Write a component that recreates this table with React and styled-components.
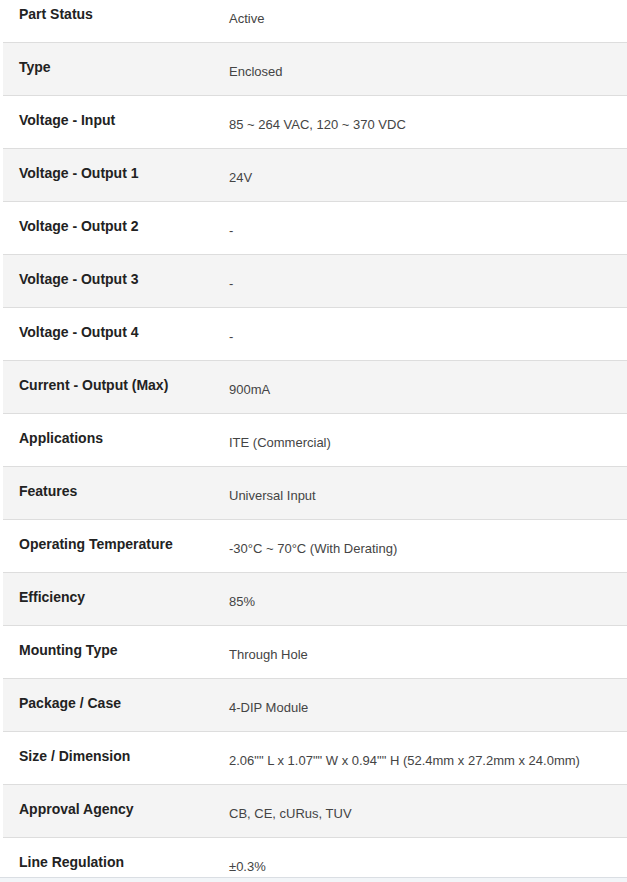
import React from "react";
import styled, { createGlobalStyle } from "styled-components";

const GlobalStyle = createGlobalStyle`
  html, body {
    margin: 0;
    padding: 0;
    background: #ffffff;
    overflow: hidden;
  }
  body {
    font-family: "Liberation Sans", Arial, sans-serif;
  }
`;

const specs = [
  ["Part Status", "Active"],
  ["Type", "Enclosed"],
  ["Voltage - Input", "85 ~ 264 VAC, 120 ~ 370 VDC"],
  ["Voltage - Output 1", "24V"],
  ["Voltage - Output 2", "-"],
  ["Voltage - Output 3", "-"],
  ["Voltage - Output 4", "-"],
  ["Current - Output (Max)", "900mA"],
  ["Applications", "ITE (Commercial)"],
  ["Features", "Universal Input"],
  ["Operating Temperature", "-30°C ~ 70°C (With Derating)"],
  ["Efficiency", "85%"],
  ["Mounting Type", "Through Hole"],
  ["Package / Case", "4-DIP Module"],
  ["Size / Dimension", "2.06\"\" L x 1.07\"\" W x 0.94\"\" H (52.4mm x 27.2mm x 24.0mm)"],
  ["Approval Agency", "CB, CE, cURus, TUV"],
  ["Line Regulation", "±0.3%"],
];

const Page = styled.div`
  display: flex;
  flex-direction: column;
  height: 882px;
`;

const SpecTable = styled.div`
  margin: -10px 0 0 3px;
  height: 887px;
  overflow: hidden;
  flex-shrink: 0;
`;

const Row = styled.div`
  display: grid;
  grid-template-columns: 210px 1fr;
  height: 53px;
  box-sizing: border-box;
  border-bottom: 1px solid #dddddd;
  background: ${(p) => (p.$shaded ? "#f4f4f4" : "#ffffff")};
`;

const Label = styled.div`
  padding: 16px 0 0 16px;
  font-size: 14px;
  line-height: 16px;
  font-weight: 700;
  color: #222222;
`;

const Value = styled.div`
  padding: 21px 0 0 16px;
  font-size: 13px;
  line-height: 16px;
  color: #444444;
`;

const Footer = styled.div`
  flex: 1;
  border-top: 1px solid #dadee3;
  background: #f2f5f8;
`;

function App() {
  return (
    <Page>
      <GlobalStyle />
      <SpecTable>
        {specs.map(([label, value], index) => (
          <Row key={label} $shaded={index % 2 === 1}>
            <Label>{label}</Label>
            <Value>{value}</Value>
          </Row>
        ))}
      </SpecTable>
      <Footer />
    </Page>
  );
}

export default App;
